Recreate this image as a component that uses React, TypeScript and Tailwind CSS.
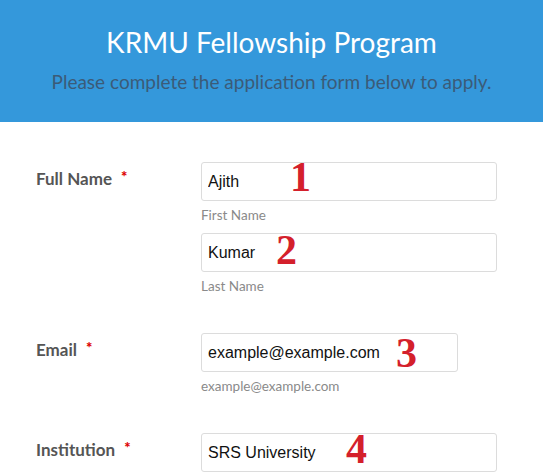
import React from "react";

const labelFont = { fontFamily: "Lato, 'Noto Sans', sans-serif" };

function Mark({ n, className }: { n: string; className: string }) {
  return (
    <span
      className={`absolute text-[42px] leading-[42px] font-bold text-[#d4202b] pointer-events-none ${className}`}
      style={{ fontFamily: "'Liberation Serif', serif" }}
    >
      {n}
    </span>
  );
}

function Field({
  value,
  width,
  mark,
}: {
  value: string;
  width: string;
  mark?: React.ReactNode;
}) {
  return (
    <div className={`relative ${width}`}>
      <input
        readOnly
        defaultValue={value}
        className="w-full h-[39px] border border-[#dcdcdc] rounded-[3px] bg-white pl-[6px] text-[16px] text-[#111] outline-none"
        style={{ fontFamily: "'Liberation Sans', Arial, sans-serif" }}
      />
      {mark}
    </div>
  );
}

function Label({ text }: { text: string }) {
  return (
    <div
      className="w-[201px] shrink-0 pl-[36px] pt-[7px] flex items-start text-[17px] leading-[20px] font-bold text-[#555]"
      style={labelFont}
    >
      <span>{text}</span>
      <span className="ml-[9px] text-[#d00] text-[15px] leading-[15px] font-black">*</span>
    </div>
  );
}

function Sub({ text }: { text: string }) {
  return (
    <div className="mt-[5px] text-[13.5px] leading-[18px] text-[#8a8a8a]" style={labelFont}>
      {text}
    </div>
  );
}

export default function App() {
  return (
    <div className="w-[543px] h-[476px] bg-white overflow-hidden">
      <div className="h-[122px] bg-[#3498db] flex flex-col items-center pt-[24px]">
        <h1 className="text-[28px] leading-[36px] font-normal text-white" style={labelFont}>
          KRMU Fellowship Program
        </h1>
        <p className="mt-[10px] text-[19px] leading-[24px] text-[#3b5b78]" style={labelFont}>
          Please complete the application form below to apply.
        </p>
      </div>

      <div className="pt-[40px] flex flex-col">
        <div className="flex">
          <Label text="Full Name" />
          <div className="flex flex-col">
            <Field value="Ajith" width="w-[296px]" mark={<Mark n="1" className="left-[89px] top-[-6px]" />} />
            <Sub text="First Name" />
            <div className="mt-[9px]">
              <Field value="Kumar" width="w-[296px]" mark={<Mark n="2" className="left-[75px] top-[-4px]" />} />
            </div>
            <Sub text="Last Name" />
          </div>
        </div>

        <div className="flex mt-[38px]">
          <Label text="Email" />
          <div className="flex flex-col">
            <Field value="example@example.com" width="w-[257px]" mark={<Mark n="3" className="left-[195px] top-[-1px]" />} />
            <Sub text="example@example.com" />
          </div>
        </div>

        <div className="flex mt-[38px]">
          <Label text="Institution" />
          <div className="flex flex-col">
            <Field value="SRS University" width="w-[296px]" mark={<Mark n="4" className="left-[145px] top-[-5px]" />} />
          </div>
        </div>
      </div>
    </div>
  );
}
